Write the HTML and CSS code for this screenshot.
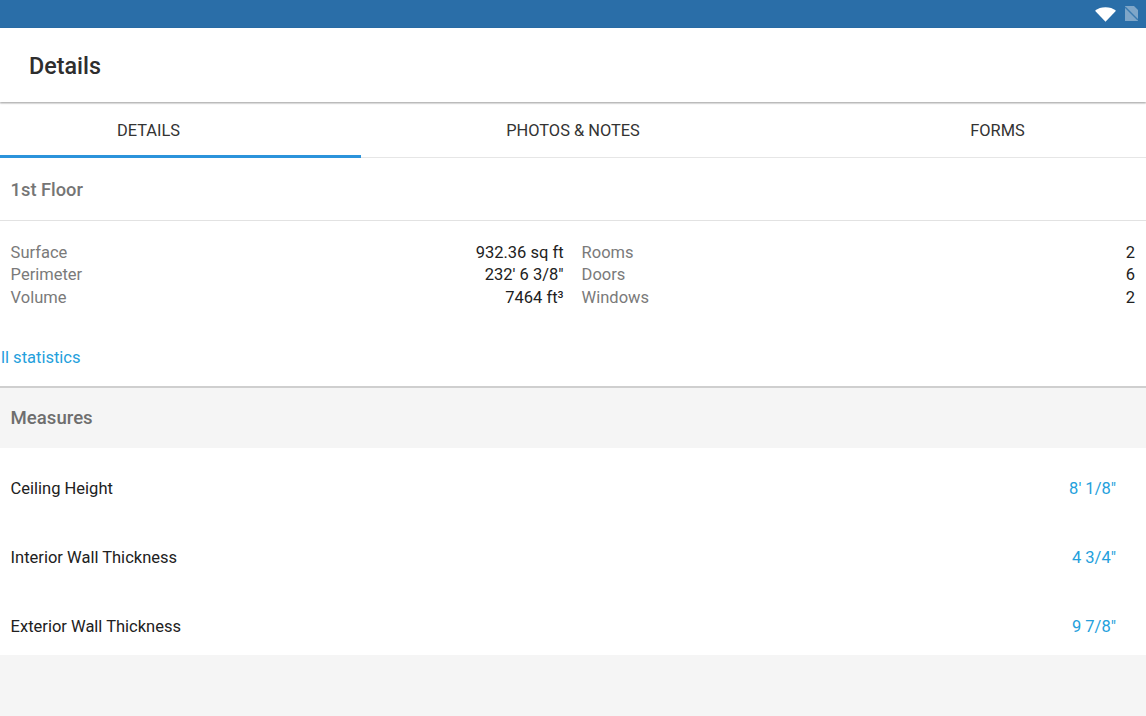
FILE: index.html
```html
<!DOCTYPE html>
<html lang="en">
<head>
<meta charset="utf-8">
<title>Details</title>
<link rel="stylesheet" href="styles.css">
</head>
<body>
<div class="status">
  <svg class="wifi" width="21" height="16" viewBox="0 0 22 16"><path d="M0 4.500C3 2 6.700.8 11 .8s8 1.200 11 3.700L11 16z" fill="#fff"/></svg>
  <svg class="sim" width="13" height="15" viewBox="0 0 13 15"><path d="M0 0h9l4 4v11H0z" fill="#7fa6c8"/><path d="M0 1l13 13" stroke="#3a7aaf" stroke-width="1.500"/></svg>
</div>
<header class="appbar"><h1>Details</h1></header>
<nav class="tabs">
  <div class="tab active">DETAILS</div>
  <div class="tab middle">PHOTOS &amp; NOTES</div>
  <div class="tab last">FORMS</div>
</nav>
<section class="floor">
  <h2 class="floor-title">1st Floor</h2>
  <div class="stats">
    <dl class="col">
      <div class="row"><dt>Surface</dt><dd>932.36 sq ft</dd></div>
      <div class="row"><dt>Perimeter</dt><dd>232' 6 3/8"</dd></div>
      <div class="row"><dt>Volume</dt><dd>7464 ft³</dd></div>
    </dl>
    <dl class="col">
      <div class="row"><dt>Rooms</dt><dd>2</dd></div>
      <div class="row"><dt>Doors</dt><dd>6</dd></div>
      <div class="row"><dt>Windows</dt><dd>2</dd></div>
    </dl>
  </div>
  <div class="all">ll statistics</div>
</section>
<section class="measures">
  <h2 class="measures-title">Measures</h2>
  <div class="list">
    <div class="item"><span>Ceiling Height</span><span class="val">8' 1/8"</span></div>
    <div class="item"><span>Interior Wall Thickness</span><span class="val">4 3/4"</span></div>
    <div class="item"><span>Exterior Wall Thickness</span><span class="val">9 7/8"</span></div>
  </div>
</section>
</body>
</html>
```
FILE: styles.css
```css
html, body { margin: 0; padding: 0; }
body {
  width: 1146px;
  height: 716px;
  overflow: hidden;
  background: #f5f5f5;
  font-family: Roboto, "Liberation Sans", sans-serif;
  color: #212121;
  display: flex;
  flex-direction: column;
}
.status {
  height: 28px;
  background: #2a6ea8;
  display: flex;
  align-items: center;
  justify-content: flex-end;
  gap: 9px;
  padding-right: 8px;
  flex: none;
}
.wifi { margin-top: -1px; }
.sim { margin-top: -1px; }
.appbar {
  height: 74px;
  padding-top: 2px;
  box-sizing: border-box;
  background: #fff;
  box-shadow: 0 1px 2px rgba(0,0,0,.35);
  display: flex;
  align-items: center;
  padding-left: 29px;
  position: relative;
  flex: none;
}
.appbar h1 {
  margin: 0;
  font-size: 23.3px;
  font-weight: 500;
  color: #2e2e2e;
}
.tabs {
  margin-top: 2px;
  height: 54px;
  box-sizing: border-box;
  background: #fff;
  border-bottom: 1px solid #e6e6e6;
  display: flex;
  flex: none;
}
.tab {
  display: flex;
  align-items: center;
  justify-content: center;
  font-size: 16.4px;
  color: #333;
  height: 54px;
  box-sizing: border-box;
  padding-bottom: 2px;
  flex: none;
}
.tab.active {
  width: 361px;
  padding: 1px 64px 0 0;
  border-bottom: 3px solid #2b93db;
}
.tab.middle { width: 424px; }
.tab.last { width: 361px; padding-left: 64px; }
.floor {
  background: #fff;
  border-bottom: 2px solid #cfcfcf;
  height: 228px;
  flex: none;
}
.floor-title {
  margin: 0;
  height: 62px;
  line-height: 64px;
  padding-left: 10.6px;
  font-size: 18.3px;
  font-weight: 500;
  color: #757575;
  border-bottom: 1px solid #e2e2e2;
}
.stats {
  display: grid;
  grid-template-columns: 553px 1fr;
  column-gap: 18px;
  padding: 21px 11px 0 10.6px;
}
.col { margin: 0; }
.row {
  display: flex;
  justify-content: space-between;
  height: 22.4px;
  line-height: 22.4px;
  font-size: 16.5px;
}
dt { color: #7a7a7a; }
dd { margin: 0; color: #212121; }
.all {
  margin-top: 38px;
  padding-left: 1px;
  font-size: 16.5px;
  line-height: 22px;
  color: #24a0dc;
}
.measures { background: #f5f5f5; flex: none; }
.measures-title {
  margin: 0;
  height: 60px;
  line-height: 60px;
  padding-left: 10.6px;
  font-size: 18.6px;
  font-weight: 500;
  color: #6e6e6e;
}
.list { background: #fff; height: 207px; }
.item {
  height: 69px;
  display: flex;
  justify-content: space-between;
  align-items: center;
  padding: 12px 30px 0 10.6px;
  font-size: 16.5px;
  color: #212121;
  box-sizing: border-box;
}
.val { color: #24a0dc; }
```
